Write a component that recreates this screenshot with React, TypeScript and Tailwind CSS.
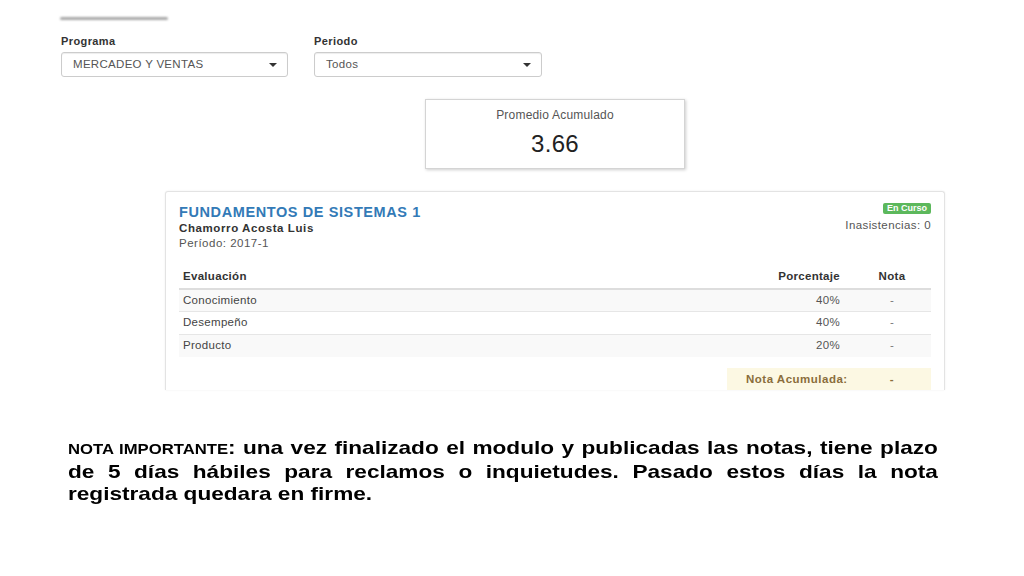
import React from "react";

const rows = [
  { name: "Conocimiento", pct: "40%", nota: "-" },
  { name: "Desempeño", pct: "40%", nota: "-" },
  { name: "Producto", pct: "20%", nota: "-" },
];

function Select({ value, width }: { value: string; width: string }) {
  return (
    <div
      className={`${width} h-[25px] flex items-center justify-between pl-[11px] pr-[10px] border border-[#cccccc] rounded-[3px] bg-white shadow-[inset_0_1px_1px_rgba(0,0,0,0.075)]`}
    >
      <span className="text-[11.5px] text-[#555] tracking-[0.3px]">{value}</span>
      <span className="w-0 h-0 border-l-[4px] border-r-[4px] border-t-[4px] border-l-transparent border-r-transparent border-t-[#333]" />
    </div>
  );
}

export default function App() {
  return (
    <div
      className="w-[1024px] h-[576px] bg-white overflow-hidden text-[#333]"
      style={{ fontFamily: '"Liberation Sans", Arial, sans-serif' }}
    >
      <div className="ml-[60px] mt-[17px] w-[108px] h-[3px] bg-[#a8a8a8] rounded-full blur-[1px]" />

      <div className="flex gap-[26px] ml-[61px] mt-[14px]">
        <div className="flex flex-col">
          <label className="text-[11px] font-bold tracking-[0.4px] leading-[14px] mb-[4px]">Programa</label>
          <Select value="MERCADEO Y VENTAS" width="w-[227px]" />
        </div>
        <div className="flex flex-col">
          <label className="text-[11px] font-bold tracking-[0.4px] leading-[14px] mb-[4px]">Periodo</label>
          <Select value="Todos" width="w-[228px]" />
        </div>
      </div>

      <div className="ml-[425px] mt-[22px] w-[260px] h-[70px] border border-[#d4d4d4] shadow-[1px_1px_3px_rgba(0,0,0,0.2)] flex flex-col items-center pt-[6px]">
        <div className="text-[12px] text-[#555] tracking-[0.2px]">Promedio Acumulado</div>
        <div className="text-[24px] text-[#222] leading-[28px] mt-[6px] tracking-[0.3px]">3.66</div>
      </div>

      <div className="ml-[165px] mt-[22px] w-[780px] h-[199px] overflow-hidden border-l border-t border-r border-[#e3e3e3] rounded-t-[3px] shadow-[0_0_2px_rgba(0,0,0,0.08)] px-[13px] pt-[12px]">
        <div className="flex justify-between">
          <div>
            <div className="text-[14.5px] font-bold text-[#337ab7] tracking-[0.6px] leading-[17px]">
              FUNDAMENTOS DE SISTEMAS 1
            </div>
            <div className="text-[11.5px] font-bold tracking-[0.6px] leading-[15px]">Chamorro Acosta Luis</div>
            <div className="text-[11.5px] text-[#555] tracking-[0.5px] leading-[14px]">Período: 2017-1</div>
          </div>
          <div className="flex flex-col items-end">
            <span className="bg-[#5cb85c] text-white text-[9px] font-bold px-[4px] leading-[11px] rounded-[2px] -mt-[1px]">
              En Curso
            </span>
            <span className="text-[11.5px] text-[#555] tracking-[0.4px] mt-[3px]">Inasistencias: 0</span>
          </div>
        </div>

        <table className="w-full mt-[15px] border-collapse text-[11.5px] tracking-[0.3px]">
          <thead>
            <tr className="border-b-2 border-[#dddddd]">
              <th className="text-left font-bold pl-[4px] h-[24px]">Evaluación</th>
              <th className="text-right font-bold w-[160px] pr-[13px]">Porcentaje</th>
              <th className="text-center font-bold w-[78px]">Nota</th>
            </tr>
          </thead>
          <tbody>
            {rows.map((r, i) => (
              <tr key={r.name} className={`${i % 2 === 0 ? "bg-[#f9f9f9]" : "bg-white"} border-b border-[#e6e6e6] last:border-b-0`}>
                <td className="pl-[4px] h-[22.5px] text-[#444]">{r.name}</td>
                <td className="text-right pr-[13px] text-[#555]">{r.pct}</td>
                <td className="text-center text-[#777]">{r.nota}</td>
              </tr>
            ))}
          </tbody>
        </table>

        <div className="flex justify-end mt-[11px]">
          <div className="w-[204px] h-[24px] bg-[#fcf8e3] flex items-center text-[11.5px] font-bold text-[#8a6d3b] tracking-[0.5px]">
            <span className="w-[126px] pl-[19px]">Nota Acumulada:</span>
            <span className="flex-1 text-center">-</span>
          </div>
        </div>
      </div>

      <p className="ml-[68px] mt-[47px] w-[731px] origin-left scale-x-[1.19] text-justify text-[19px] font-bold text-black leading-[22.5px]">
        <span className="text-[14px]">NOTA IMPORTANTE</span>: una vez finalizado el modulo y publicadas las notas, tiene plazo de 5 días hábiles para reclamos o inquietudes. Pasado estos días la nota registrada quedara en firme.
      </p>
    </div>
  );
}
